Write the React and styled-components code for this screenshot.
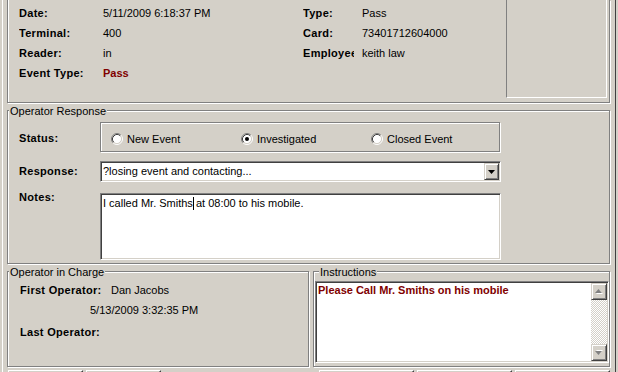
import React from 'react';
import styled, { createGlobalStyle, css } from 'styled-components';

const GlobalStyle = createGlobalStyle`
  html, body { margin: 0; padding: 0; background: #D4D0C8; }
  body {
    font-family: "Liberation Sans", Arial, sans-serif;
    font-size: 11px;
    color: #000;
  }
  * { box-sizing: border-box; }
`;

const sunken = css`
  border: 1px solid;
  border-color: #808080 #fff #fff #808080;
  box-shadow: inset 1px 1px 0 #404040, inset -1px -1px 0 #D4D0C8;
  background: #fff;
`;

const raised = css`
  border: 1px solid;
  border-color: #D4D0C8 #404040 #404040 #D4D0C8;
  box-shadow: inset 1px 1px 0 #fff, inset -1px -1px 0 #808080;
  background: #D4D0C8;
`;

const Window = styled.div`
  width: 618px;
  height: 372px;
  overflow: hidden;
  display: flex;
  flex-direction: column;
  padding: 0 8px 0 7px;
  background: #D4D0C8;
  box-shadow: inset 2px 0 0 #D4D0C8, inset 3px 0 0 #fff,
    inset -2px 0 0 #D4D0C8, inset -3px 0 0 #404040;
  & > * { flex-shrink: 0; }
`;

const Group = styled.div`
  position: relative;
  border: 1px solid #808080;
  border-top: ${p => (p.$open ? 'none' : '1px solid #808080')};
  box-shadow: 1px 1px 0 #fff, ${p => (p.$open ? 'inset 1px 0 0 #fff' : 'inset 1px 1px 0 #fff')};
`;

const Legend = styled.span`
  position: absolute;
  top: -6px;
  left: ${p => p.$left ?? 1}px;
  padding: 0 1px;
  line-height: 13px;
  background: #D4D0C8;
  white-space: nowrap;
`;

/* ---- event summary ---- */

const SummaryGroup = styled(Group)`
  display: flex;
  height: 103px;
`;

const InfoGrid = styled.div`
  flex: 1;
  display: grid;
  grid-template-columns: 84px 200px 59px 1fr;
  grid-auto-rows: 20px;
  align-content: start;
  padding: 3px 0 0 11px;
  line-height: 20px;
`;

const InfoLabel = styled.div`
  font-weight: bold;
  letter-spacing: 0.3px;
  white-space: nowrap;
  overflow: hidden;
  max-width: ${p => (p.$clip ? `${p.$clip}px` : 'none')};
`;

const InfoValue = styled.div`
  white-space: nowrap;
  color: ${p => (p.$accent ? '#800000' : '#000')};
  font-weight: ${p => (p.$accent ? 'bold' : 'normal')};
`;

const SidePanel = styled.div`
  flex: none;
  width: 101px;
  height: 98px;
  margin-right: 2px;
  border-left: 1px solid #808080;
  border-right: 1px solid #fff;
  border-bottom: 1px solid #fff;
`;

/* ---- operator response ---- */

const ResponseGroup = styled(Group)`
  margin-top: 7px;
  height: 154px;
  display: flex;
  flex-direction: column;
  padding: 11px 0 0 11px;
`;

const FormRow = styled.div`
  display: flex;
  align-items: ${p => (p.$top ? 'flex-start' : 'center')};
  margin-top: ${p => p.$gap || 0}px;
`;

const FieldLabel = styled.div`
  flex: none;
  width: 81px;
  font-weight: bold;
  letter-spacing: 0.3px;
  line-height: 13px;
  margin-top: ${p => p.$shift || 0}px;
`;

const RadioFrame = styled.div`
  width: 400px;
  height: 30px;
  border: 1px solid #808080;
  box-shadow: 1px 1px 0 #fff, inset 1px 1px 0 #fff;
  display: grid;
  grid-template-columns: repeat(3, 130px);
  align-items: center;
  padding: 4px 0 0 10px;
`;

const RadioItem = styled.label`
  display: flex;
  align-items: center;
  gap: 4px;
  line-height: 13px;
  white-space: nowrap;
`;

const Combo = styled.div`
  ${sunken}
  width: 401px;
  height: 21px;
  display: flex;
  align-items: center;
  padding: 1px 1px 1px 2px;
`;

const ComboText = styled.div`
  flex: 1;
  line-height: 13px;
  white-space: nowrap;
`;

const ArrowButton = styled.div`
  ${raised}
  flex: none;
  width: ${p => p.$w || 15}px;
  height: ${p => p.$h || 17}px;
  display: flex;
  align-items: center;
  justify-content: center;
`;

const NotesBox = styled.div`
  ${sunken}
  width: 401px;
  height: 67px;
  padding: 3px 2px;
  line-height: 13px;
`;

const Caret = styled.span`
  display: inline-block;
  width: 1px;
  height: 13px;
  margin-right: -1px;
  vertical-align: top;
  background: #000;
`;

/* ---- bottom panels ---- */

const BottomRow = styled.div`
  display: flex;
  gap: 4px;
  margin-top: 7px;
  height: 96px;
`;

const ChargeGroup = styled(Group)`
  width: 302px;
  padding: 8px 0 0 12px;
`;

const ChargeRow = styled.div`
  display: flex;
  line-height: 20px;
  padding-left: ${p => p.$indent || 0}px;
  margin-top: ${p => p.$gap || 0}px;
  white-space: nowrap;
`;

const ChargeLabel = styled.div`
  width: 91px;
  font-weight: bold;
  letter-spacing: 0.3px;
`;

const InstructionsGroup = styled(Group)`
  flex: 1;
  padding: 9px 0 3px 1px;
`;

const InstrBox = styled.div`
  ${sunken}
  height: 82px;
  display: flex;
  padding: 1px;
`;

const InstrText = styled.div`
  flex: 1;
  padding: 1px 0 0 1px;
  line-height: 13px;
  font-weight: bold;
  color: #800000;
`;

const ScrollBar = styled.div`
  width: 16px;
  display: flex;
  flex-direction: column;
`;

const ScrollTrack = styled.div`
  flex: 1;
  background: repeating-conic-gradient(#fff 0 25%, #D4D0C8 0 50%) 0 0 / 2px 2px;
`;

/* ---- button strip ---- */

const ButtonBar = styled.div`
  display: flex;
  justify-content: space-between;
  margin-top: 3px;
  padding-left: 1px;
`;

const ButtonSet = styled.div`
  display: flex;
  gap: 3px;
`;

const Button = styled.div`
  width: ${p => p.$w}px;
  height: 23px;
  border: 1px solid;
  border-color: #fff #404040 #404040 #fff;
  box-shadow: inset -1px -1px 0 #808080;
`;

function RadioMark({ checked }) {
  return (
    <svg width="12" height="12" viewBox="0 0 12 12">
      <circle cx="6" cy="6" r="4.5" fill="#fff" />
      <path d="M2.11 9.89A5.5 5.5 0 0 1 9.89 2.11" stroke="#808080" fill="none" />
      <path d="M9.89 2.11A5.5 5.5 0 0 1 2.11 9.89" stroke="#fff" fill="none" />
      <path d="M2.82 9.18A4.5 4.5 0 0 1 9.18 2.82" stroke="#404040" fill="none" />
      <path d="M9.18 2.82A4.5 4.5 0 0 1 2.82 9.18" stroke="#D4D0C8" fill="none" />
      {checked && <circle cx="6" cy="6" r="2" fill="#000" />}
    </svg>
  );
}

const DownArrow = () => (
  <svg width="7" height="4" viewBox="0 0 7 4">
    <path d="M0 0H7L3.5 4Z" fill="#000" />
  </svg>
);

const GrayArrow = ({ up }) => (
  <svg width="8" height="5" viewBox="0 0 8 5" style={{ transform: up ? 'none' : 'scaleY(-1)' }}>
    <path d="M4.5 1L8 5H1Z" fill="#fff" />
    <path d="M3.5 0L7 4H0Z" fill="#808080" />
  </svg>
);

const summary = [
  ['Date:', '5/11/2009 6:18:37 PM', 'Type:', 'Pass'],
  ['Terminal:', '400', 'Card:', '73401712604000'],
  ['Reader:', 'in', 'Employee', 'keith law'],
];

export default function App() {
  return (
    <>
      <GlobalStyle />
      <Window>
        <SummaryGroup $open>
          <InfoGrid>
            {summary.map(([l1, v1, l2, v2]) => (
              <React.Fragment key={l1}>
                <InfoLabel>{l1}</InfoLabel>
                <InfoValue>{v1}</InfoValue>
                <InfoLabel $clip={51}>{l2}</InfoLabel>
                <InfoValue>{v2}</InfoValue>
              </React.Fragment>
            ))}
            <InfoLabel>Event Type:</InfoLabel>
            <InfoValue $accent>Pass</InfoValue>
          </InfoGrid>
          <SidePanel />
        </SummaryGroup>

        <ResponseGroup>
          <Legend>Operator Response</Legend>
          <FormRow>
            <FieldLabel $shift={3}>Status:</FieldLabel>
            <RadioFrame>
              <RadioItem><RadioMark />New Event</RadioItem>
              <RadioItem><RadioMark checked />Investigated</RadioItem>
              <RadioItem><RadioMark />Closed Event</RadioItem>
            </RadioFrame>
          </FormRow>
          <FormRow $gap={9}>
            <FieldLabel>Response:</FieldLabel>
            <Combo>
              <ComboText>?losing event and contacting...</ComboText>
              <ArrowButton><DownArrow /></ArrowButton>
            </Combo>
          </FormRow>
          <FormRow $gap={11} $top>
            <FieldLabel $shift={-2}>Notes:</FieldLabel>
            <NotesBox>
              I called Mr. Smiths<Caret /> at 08:00 to his mobile.
            </NotesBox>
          </FormRow>
        </ResponseGroup>

        <BottomRow>
          <ChargeGroup>
            <Legend>Operator in Charge</Legend>
            <ChargeRow>
              <ChargeLabel>First Operator:</ChargeLabel>
              <div>Dan Jacobs</div>
            </ChargeRow>
            <ChargeRow $indent={70}>5/13/2009 3:32:35 PM</ChargeRow>
            <ChargeRow $gap={2}>
              <ChargeLabel>Last Operator:</ChargeLabel>
            </ChargeRow>
          </ChargeGroup>
          <InstructionsGroup>
            <Legend $left={5}>Instructions</Legend>
            <InstrBox>
              <InstrText>Please Call Mr. Smiths on his mobile</InstrText>
              <ScrollBar>
                <ArrowButton $w={16} $h={17}><GrayArrow up /></ArrowButton>
                <ScrollTrack />
                <ArrowButton $w={16} $h={17}><GrayArrow /></ArrowButton>
              </ScrollBar>
            </InstrBox>
          </InstructionsGroup>
        </BottomRow>

        <ButtonBar>
          <ButtonSet>
            <Button $w={75} />
            <Button $w={75} />
          </ButtonSet>
          <ButtonSet>
            <Button $w={95} />
            <Button $w={95} />
            <Button $w={95} />
          </ButtonSet>
        </ButtonBar>
      </Window>
    </>
  );
}
